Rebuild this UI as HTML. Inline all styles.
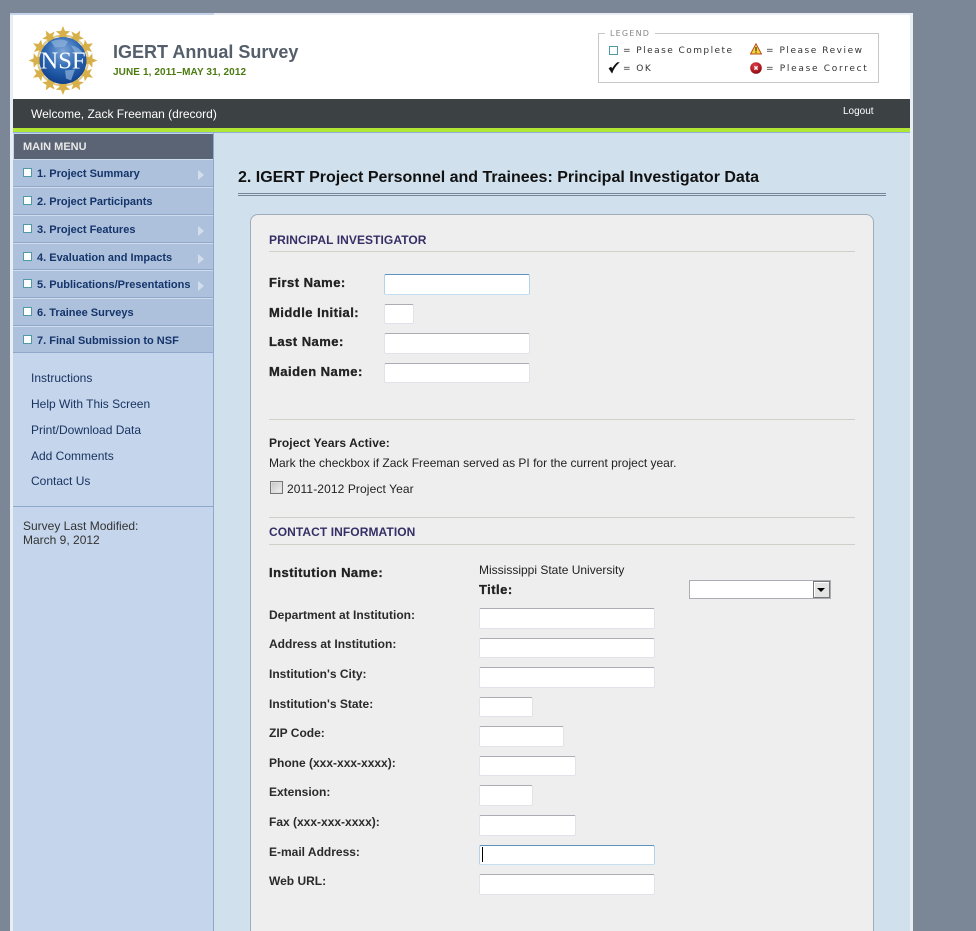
<!DOCTYPE html>
<html><head><meta charset="utf-8"><title>IGERT Annual Survey</title>
<style>
html,body{margin:0;padding:0;background:#7b8796;width:976px;height:931px;overflow:hidden;}
body{position:relative;font-family:"Liberation Sans",Arial,sans-serif;}
.a{position:absolute;white-space:nowrap;}
.in{position:absolute;box-sizing:border-box;background:#fff;border:1px solid #e2e3ea;border-top-color:#abadb3;border-radius:2px;}
.foc{border-color:#c5dff0;border-top-color:#5d93bd;border-left-color:#b5d3e8;border-right-color:#b5d3e8;}
.mi{position:absolute;left:13px;width:200px;box-sizing:border-box;background:#adc1dc;border-top:1px solid #cfdcee;border-bottom:1px solid #90a8ca;}
.mi i{position:absolute;left:10px;top:8px;width:7px;height:7px;background:#fff;border:1px solid #4f9aa8;}
.mi b{position:absolute;left:24px;top:7px;font-size:11px;line-height:14px;color:#14346a;white-space:nowrap;}
.mi u{position:absolute;left:185px;top:10px;width:0;height:0;border-left:6px solid #d3deec;border-top:5px solid transparent;border-bottom:5px solid transparent;}
.lk{left:31px;font-size:12px;line-height:14px;color:#17325f;}
.lg{font-family:"DejaVu Sans",sans-serif;font-size:9px;line-height:12px;letter-spacing:1.45px;color:#333;}
.bl{font-size:13px;line-height:15px;font-weight:bold;color:#222;letter-spacing:.47px;left:269px;-webkit-text-stroke:.3px #222;}
.sl{font-size:12px;line-height:14px;font-weight:bold;color:#2a2a2a;left:269px;}
.sh{left:269px;font-size:12px;line-height:14px;font-weight:bold;color:#352f66;letter-spacing:.08px;}
.hr{position:absolute;left:269px;width:586px;height:1px;background:#cfcfca;}
</style></head><body>

<div class="a" style="left:10px;top:13px;width:903px;height:918px;background:#e8eef4;"></div>
<div class="a" style="left:10px;top:13px;width:204px;height:2px;background:#c4d3ea;"></div>
<div class="a" style="left:13px;top:15px;width:897px;height:84px;background:#fff;"></div>
<div class="a" style="left:13px;top:99px;width:897px;height:29px;background:#3c4144;"></div>
<div class="a" style="left:13px;top:128px;width:897px;height:4px;background:#b2e634;"></div>
<div class="a" style="left:13px;top:132px;width:897px;height:1px;background:#8eaed6;"></div>
<div class="a" style="left:13px;top:133px;width:897px;height:798px;background:#d0e1ed;"></div>
<div class="a" style="left:13px;top:133px;width:200px;height:798px;background:#c4d5ec;border-right:1px solid #8ea8cc;"></div>

<!-- logo -->
<svg class="a" style="left:27px;top:25px;" width="72" height="72" viewBox="0 0 72 72">
<defs>
<polygon id="st" points="0,-7.5 2,-2.5 7.2,-2.3 3.2,1 4.5,6.1 0,3.4 -4.5,6.1 -3.2,1 -7.2,-2.3 -2,-2.5" fill="#d8b04a"/>
<radialGradient id="gb" cx=".5" cy=".3" r=".75"><stop offset="0" stop-color="#7fa6d8"/><stop offset=".5" stop-color="#2a66b2"/><stop offset="1" stop-color="#0c3a86"/></radialGradient>
</defs>
<g transform="translate(36,35.5)">
<circle r="25" fill="none" stroke="#e2c981" stroke-width="2"/>
<use href="#st" transform="rotate(0) translate(0,-27)"/><use href="#st" transform="rotate(30) translate(0,-27)"/><use href="#st" transform="rotate(60) translate(0,-27)"/><use href="#st" transform="rotate(90) translate(0,-27)"/><use href="#st" transform="rotate(120) translate(0,-27)"/><use href="#st" transform="rotate(150) translate(0,-27)"/><use href="#st" transform="rotate(180) translate(0,-27)"/><use href="#st" transform="rotate(210) translate(0,-27)"/><use href="#st" transform="rotate(240) translate(0,-27)"/><use href="#st" transform="rotate(270) translate(0,-27)"/><use href="#st" transform="rotate(300) translate(0,-27)"/><use href="#st" transform="rotate(330) translate(0,-27)"/>
<circle r="23.5" fill="url(#gb)"/>
<path d="M-12,-19 Q-2,-23 5,-19 L2,-14 L-8,-13Z M8,-15 Q16,-14 20,-7 L12,-8Z M2,10 L12,9 L8,20 L3,18Z" fill="#8fb3dc" opacity=".7"/>
<text x="0" y="8" text-anchor="middle" font-family="Liberation Serif,serif" font-size="24" fill="#fff" textLength="45" lengthAdjust="spacingAndGlyphs">NSF</text>
</g></svg>

<div class="a" style="left:113px;top:41px;font-size:18px;line-height:22px;font-weight:bold;color:#555e6b;">IGERT Annual Survey</div>
<div class="a" style="left:113px;top:66px;font-size:10px;line-height:13px;font-weight:bold;color:#4a7a10;letter-spacing:.1px;">JUNE 1, 2011–MAY 31, 2012</div>

<!-- legend -->
<div class="a" style="left:598px;top:33px;width:279px;height:48px;border:1px solid #c8c8c8;"></div>
<div class="a" style="left:605px;top:28px;background:#fff;padding:0 5px;font-family:'DejaVu Sans',sans-serif;font-size:8px;line-height:11px;letter-spacing:1.2px;color:#888;">LEGEND</div>
<div class="a" style="left:609px;top:46px;width:7px;height:7px;border:1px solid #4f9aa8;"></div>
<div class="a lg" style="left:623px;top:45px;">= Please Complete</div>
<svg class="a" style="left:608px;top:62px;" width="12" height="12" viewBox="0 0 12 12"><path d="M1,6.5 L4,11 Q6,5 11,.5 L9.5,.5 Q6,3.5 4.3,7 L3,5 Z" fill="#111" stroke="#111" stroke-width=".6"/></svg>
<div class="a lg" style="left:623px;top:63px;">= OK</div>
<svg class="a" style="left:750px;top:43px;" width="12" height="12" viewBox="0 0 12 12"><path d="M6,.8 L11.5,11 H.5Z" fill="#f5d33a" stroke="#c0481c" stroke-width="1"/><rect x="5.4" y="4" width="1.2" height="4" fill="#333"/><rect x="5.4" y="8.6" width="1.2" height="1.2" fill="#333"/></svg>
<div class="a lg" style="left:766px;top:45px;letter-spacing:1.53px;">= Please Review</div>
<svg class="a" style="left:750px;top:62px;" width="12" height="12" viewBox="0 0 12 12"><defs><radialGradient id="er" cx=".4" cy=".3" r=".8"><stop offset="0" stop-color="#e0404a"/><stop offset=".7" stop-color="#a8141c"/><stop offset="1" stop-color="#5e0a10"/></radialGradient></defs><circle cx="6" cy="6" r="5.8" fill="url(#er)"/><path d="M4.4,4.4 L7.6,7.6 M7.6,4.4 L4.4,7.6" stroke="#fff" stroke-width="1.4"/></svg>
<div class="a lg" style="left:766px;top:63px;letter-spacing:1.7px;">= Please Correct</div>

<div class="a" style="left:31px;top:107px;font-size:12px;line-height:15px;color:#fff;">Welcome, Zack Freeman (drecord)</div>
<div class="a" style="left:843px;top:105px;font-size:10px;line-height:14px;color:#fff;">Logout</div>

<!-- sidebar -->
<div class="a" style="left:14px;top:134px;width:199px;height:25px;background:#5b6474;"></div>
<div class="a" style="left:23px;top:140px;font-size:11px;line-height:14px;font-weight:bold;color:#e8e8e8;">MAIN MENU</div>

<div class="mi" style="top:159px;height:28px;"><i></i><b>1. Project Summary</b><u></u></div>
<div class="mi" style="top:187px;height:28px;"><i></i><b>2. Project Participants</b></div>
<div class="mi" style="top:215px;height:28px;"><i></i><b>3. Project Features</b><u></u></div>
<div class="mi" style="top:243px;height:27px;"><i></i><b>4. Evaluation and Impacts</b><u></u></div>
<div class="mi" style="top:270px;height:28px;"><i></i><b>5. Publications/Presentations</b><u></u></div>
<div class="mi" style="top:298px;height:28px;"><i></i><b>6. Trainee Surveys</b></div>
<div class="mi" style="top:326px;height:27px;"><i></i><b>7. Final Submission to NSF</b></div>

<div class="a lk" style="top:371px;">Instructions</div>
<div class="a lk" style="top:397px;">Help With This Screen</div>
<div class="a lk" style="top:423px;">Print/Download Data</div>
<div class="a lk" style="top:449px;">Add Comments</div>
<div class="a lk" style="top:474px;">Contact Us</div>
<div class="a" style="left:13px;top:506px;width:200px;height:1px;background:#8ea8cc;"></div>
<div class="a" style="left:23px;top:519px;font-size:12px;line-height:14px;color:#333;">Survey Last Modified:<br>March 9, 2012</div>

<!-- main -->
<div class="a" style="left:238px;top:168px;font-size:16px;line-height:20px;font-weight:bold;color:#111;">2. IGERT Project Personnel and Trainees: Principal Investigator Data</div>
<div class="a" style="left:238px;top:193px;width:648px;height:1px;background:#75859a;"></div>
<div class="a" style="left:238px;top:195px;width:648px;height:1px;background:#75859a;"></div>

<div class="a" style="left:250px;top:214px;width:622px;height:717px;background:#eee;border:1px solid #9eadb9;border-bottom:0;border-radius:8px 8px 0 0;"></div>

<div class="a sh" style="top:233px;">PRINCIPAL INVESTIGATOR</div>
<div class="hr" style="top:251px;"></div>

<div class="a bl" style="top:275px;">First Name:</div>
<div class="in foc" style="left:384px;top:274px;width:146px;height:21px;"></div>
<div class="a bl" style="top:305px;">Middle Initial:</div>
<div class="in" style="left:384px;top:304px;width:30px;height:20px;"></div>
<div class="a bl" style="top:334px;">Last Name:</div>
<div class="in" style="left:384px;top:333px;width:146px;height:21px;"></div>
<div class="a bl" style="top:364px;">Maiden Name:</div>
<div class="in" style="left:384px;top:363px;width:146px;height:20px;"></div>

<div class="hr" style="top:419px;"></div>
<div class="a" style="left:269px;top:436px;font-size:12px;line-height:14px;font-weight:bold;color:#222;letter-spacing:.1px;">Project Years Active:</div>
<div class="a" style="left:269px;top:456px;font-size:12px;line-height:14px;color:#222;">Mark the checkbox if Zack Freeman served as PI for the current project year.</div>
<div class="a" style="left:270px;top:481px;width:11px;height:11px;border:1px solid #777;background:linear-gradient(135deg,#c4c4c4,#f4f4f4);box-shadow:inset 0 0 0 1px #ddd;"></div>
<div class="a" style="left:287px;top:482px;font-size:12px;line-height:14px;color:#222;letter-spacing:.1px;">2011-2012 Project Year</div>

<div class="hr" style="top:517px;"></div>
<div class="a sh" style="top:525px;">CONTACT INFORMATION</div>
<div class="hr" style="top:544px;"></div>

<div class="a bl" style="top:565px;">Institution Name:</div>
<div class="a" style="left:479px;top:563px;font-size:12px;line-height:14px;color:#222;">Mississippi State University</div>
<div class="a bl" style="left:479px;top:582px;">Title:</div>
<div class="a" style="left:689px;top:580px;width:140px;height:17px;background:#fff;border:1px solid #abadb3;"></div>
<div class="a" style="left:813px;top:581px;width:17px;height:17px;box-sizing:border-box;background:#e4e4e4;border:1px solid #777;box-shadow:inset 1px 1px 0 #fff;"></div>
<div class="a" style="left:817px;top:588px;width:0;height:0;border-left:4px solid transparent;border-right:4px solid transparent;border-top:4px solid #000;"></div>

<div class="a sl" style="top:608px;">Department at Institution:</div>
<div class="in" style="left:479px;top:608px;width:176px;height:21px;"></div>
<div class="a sl" style="top:637px;">Address at Institution:</div>
<div class="in" style="left:479px;top:638px;width:176px;height:20px;"></div>
<div class="a sl" style="top:667px;">Institution's City:</div>
<div class="in" style="left:479px;top:667px;width:176px;height:21px;"></div>
<div class="a sl" style="top:697px;">Institution's State:</div>
<div class="in" style="left:479px;top:697px;width:54px;height:20px;"></div>
<div class="a sl" style="top:726px;">ZIP Code:</div>
<div class="in" style="left:479px;top:726px;width:85px;height:21px;"></div>
<div class="a sl" style="top:756px;">Phone (xxx-xxx-xxxx):</div>
<div class="in" style="left:479px;top:756px;width:97px;height:20px;"></div>
<div class="a sl" style="top:785px;">Extension:</div>
<div class="in" style="left:479px;top:785px;width:54px;height:21px;"></div>
<div class="a sl" style="top:815px;">Fax (xxx-xxx-xxxx):</div>
<div class="in" style="left:479px;top:815px;width:97px;height:21px;"></div>
<div class="a sl" style="top:845px;">E-mail Address:</div>
<div class="in foc" style="left:479px;top:845px;width:176px;height:20px;"></div>
<div class="a" style="left:482px;top:847px;width:1px;height:15px;background:#000;"></div>
<div class="a sl" style="top:874px;">Web URL:</div>
<div class="in" style="left:479px;top:874px;width:176px;height:21px;"></div>

</body></html>
